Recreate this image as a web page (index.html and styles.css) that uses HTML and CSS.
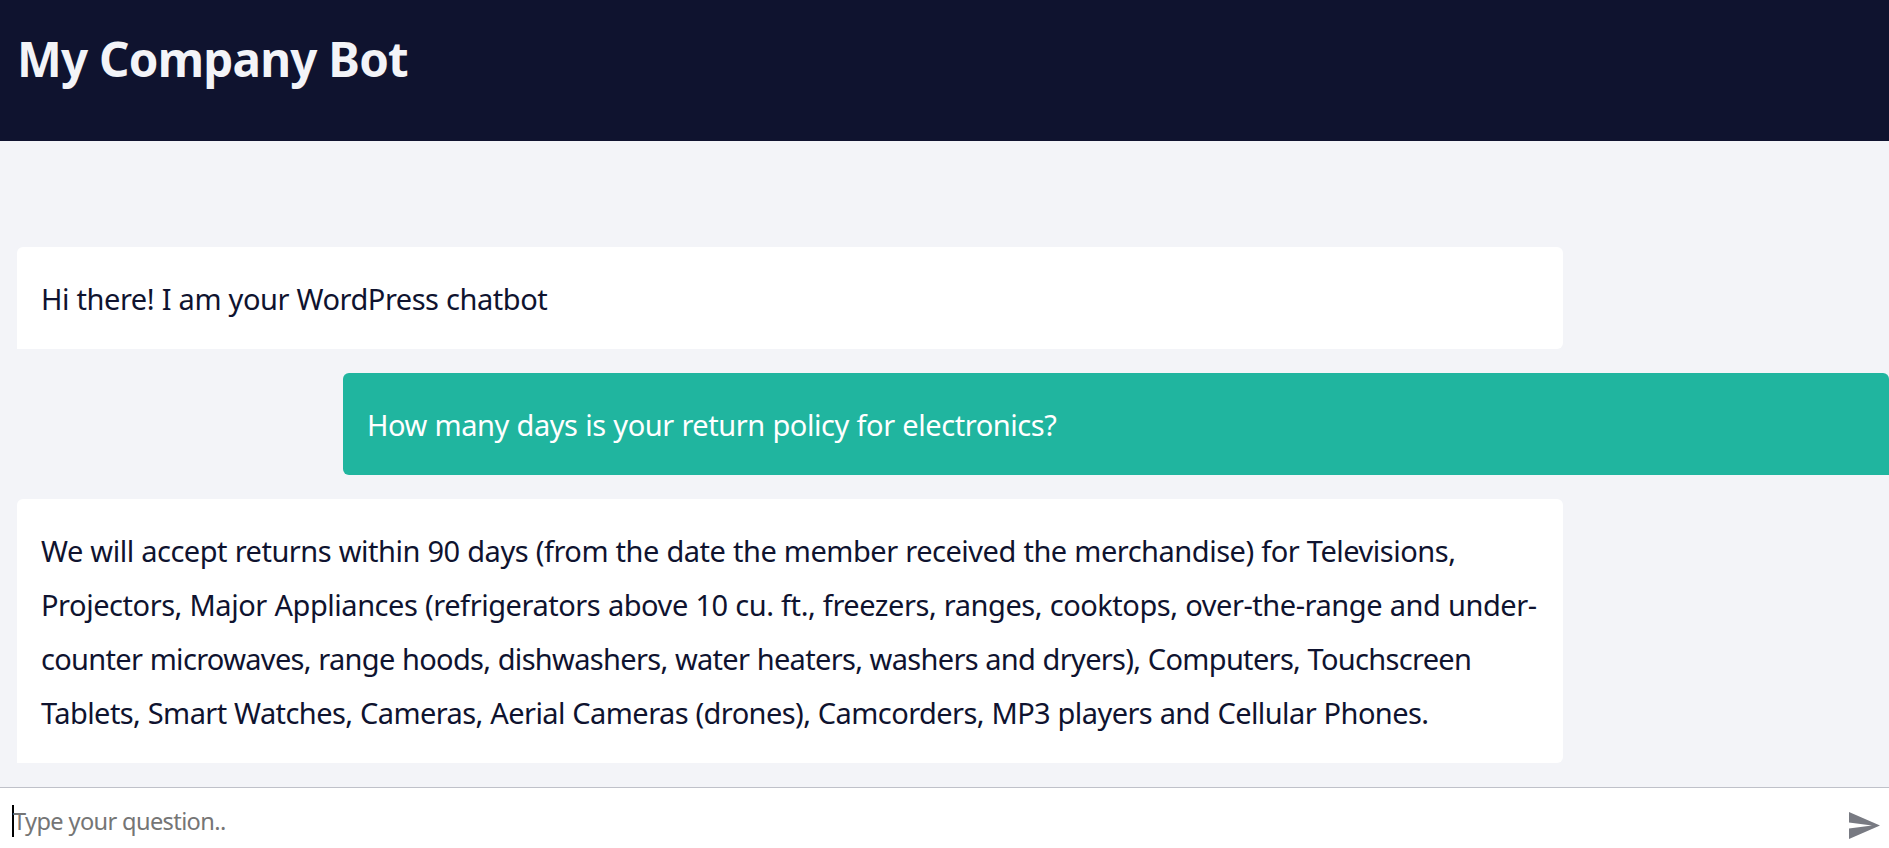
FILE: index.html
```html
<!DOCTYPE html>
<html lang="en">
<head>
<meta charset="utf-8">
<title>My Company Bot</title>
<link rel="stylesheet" href="styles.css">
</head>
<body>
<div class="chat">
  <header class="chat-header"><h1 class="chat-title">My Company Bot</h1></header>
  <main class="messages">
    <div class="message bot"><span class="line greeting">Hi there! I am your WordPress chatbot</span></div>
    <div class="message user"><span class="line question">How many days is your return policy for electronics?</span></div>
    <div class="message bot">
      <span class="line a1">We will accept returns within 90 days (from the date the member received the merchandise) for Televisions,</span>
      <span class="line a2">Projectors, Major Appliances (refrigerators above 10 cu. ft., freezers, ranges, cooktops, over-the-range and under-</span>
      <span class="line a3">counter microwaves, range hoods, dishwashers, water heaters, washers and dryers), Computers, Touchscreen</span>
      <span class="line a4">Tablets, Smart Watches, Cameras, Aerial Cameras (drones), Camcorders, MP3 players and Cellular Phones.</span>
    </div>
  </main>
  <footer class="composer">
    <span class="caret"></span>
    <span class="placeholder">Type your question..</span>
    <svg class="send" width="31" height="27" viewBox="0 0 31 27"><path d="M0 0 31 13.5 0 27V16.6L23 13.5 0 10.4Z"/></svg>
  </footer>
</div>
</body>
</html>
```
FILE: styles.css
```css
* { box-sizing: border-box; }
body { margin: 0; font-family: "Segoe UI", "Noto Sans", sans-serif; }
.chat {
  display: flex;
  flex-direction: column;
  height: 848px;
  overflow: hidden;
  background: #f3f4f8;
}
.chat-header {
  height: 141px;
  padding: 26px 0 0 17px;
  background: #0f132f;
}
.chat-title {
  margin: 0;
  color: #f3f4f8;
  font-size: 47.5px;
  line-height: 66px;
  font-weight: 700;
  letter-spacing: -0.75px;
  white-space: nowrap;
}
.messages {
  flex: 1;
  display: flex;
  flex-direction: column;
  gap: 24px;
  padding: 106px 0 24px 17px;
}
.message {
  width: 1546px;
  padding: 25px 24px 23px;
  font-size: 29px;
  line-height: 54px;
  word-spacing: 0.5px;
}
.bot {
  background: #fff;
  color: #0f132f;
  border-radius: 6px 6px 6px 0;
}
.user {
  align-self: flex-end;
  background: #20b59f;
  color: #fff;
  border-radius: 6px 6px 0 6px;
}
.line { display: block; width: max-content; white-space: nowrap; }
.greeting { letter-spacing: -0.47px; }
.question { letter-spacing: -0.434px; }
.a1 { letter-spacing: -0.482px; }
.a2 { letter-spacing: -0.452px; }
.a3 { letter-spacing: -0.683px; }
.a4 { letter-spacing: -0.574px; }
.composer {
  display: flex;
  align-items: flex-start;
  height: 61px;
  padding: 17px 9px 0 12px;
  border-top: 1px solid #bfc1c9;
  background: #fff;
}
.caret { width: 2px; height: 32px; background: #000; }
.placeholder {
  flex: 1;
  color: #757575;
  font-size: 23.6px;
  line-height: 32px;
  letter-spacing: -0.63px;
  margin-left: -1px;
}
.send { margin-top: 7px; fill: #787a82; }
```
